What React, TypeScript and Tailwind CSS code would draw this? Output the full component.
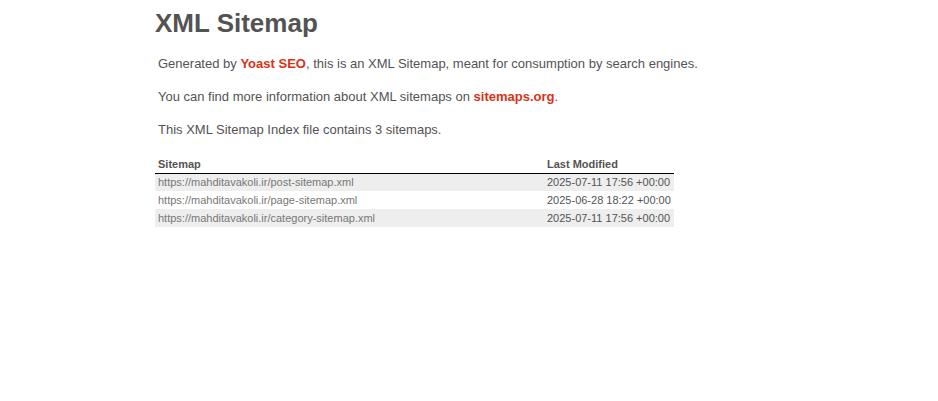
export default function App() {
  const rows = [
    ["https://mahditavakoli.ir/post-sitemap.xml", "2025-07-11 17:56 +00:00"],
    ["https://mahditavakoli.ir/page-sitemap.xml", "2025-06-28 18:22 +00:00"],
    ["https://mahditavakoli.ir/category-sitemap.xml", "2025-07-11 17:56 +00:00"],
  ];
  return (
    <div
      className="min-h-[401px] bg-white pl-[155px] pt-[8px] text-[13px] text-[#545353]"
      style={{ fontFamily: '"Liberation Sans", Arial, sans-serif' }}
    >
      <h1 className="m-0 text-[26px] font-bold leading-[30px]">XML Sitemap</h1>
      <div className="mx-[3px] mt-[18px]">
        <p className="leading-[15px]">
          Generated by{" "}
          <a className="font-bold text-[#da3114]">Yoast SEO</a>, this is an XML Sitemap, meant for consumption by search engines.
        </p>
        <p className="mt-[18px] leading-[15px]">
          You can find more information about XML sitemaps on{" "}
          <a className="font-bold text-[#da3114]">sitemaps.org</a>.
        </p>
        <p className="mt-[18px] leading-[15px]">This XML Sitemap Index file contains 3 sitemaps.</p>
      </div>
      <table className="mt-[18px] w-[519px] border-collapse text-[11px]">
        <thead>
          <tr>
            <th className="h-[18px] w-[389px] border-b border-black px-[3px] py-0 pr-[30px] text-left font-bold leading-[12px]">
              Sitemap
            </th>
            <th className="h-[18px] w-[130px] border-b border-black px-[3px] py-0 pr-[30px] text-left font-bold leading-[12px]">
              Last Modified
            </th>
          </tr>
        </thead>
        <tbody>
          {rows.map(([url, date], i) => (
            <tr key={url} className={i % 2 === 0 ? "bg-[#eeeeee]" : "bg-white"}>
              <td className="h-[18px] px-[3px] py-0 leading-[12px] text-[#777777]">{url}</td>
              <td className="h-[18px] px-[3px] py-0 leading-[12px]">{date}</td>
            </tr>
          ))}
        </tbody>
      </table>
    </div>
  );
}
